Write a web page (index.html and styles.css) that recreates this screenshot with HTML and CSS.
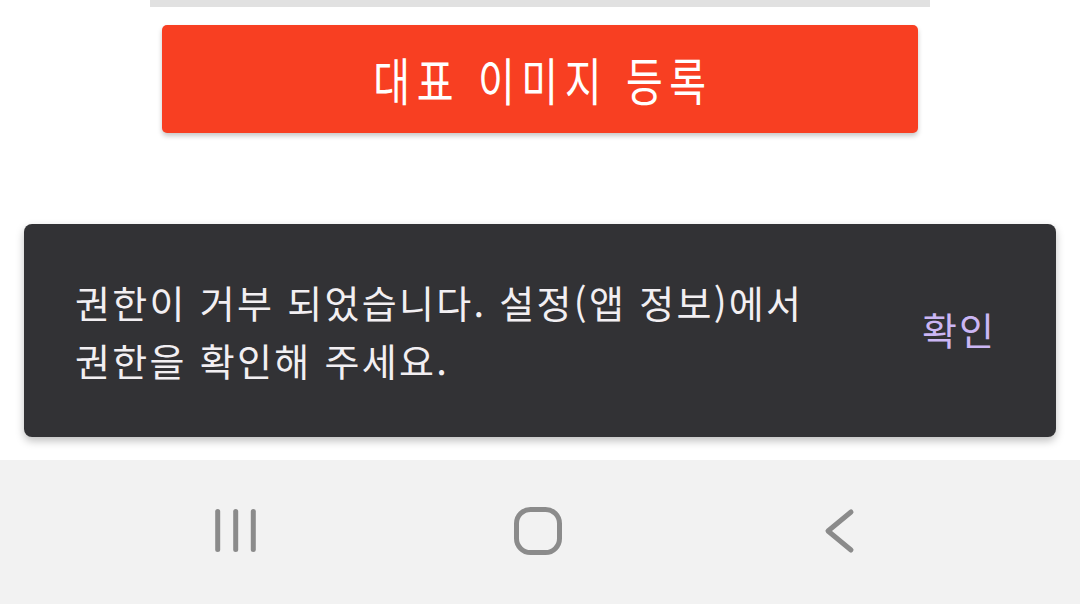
FILE: index.html
```html
<!DOCTYPE html>
<html lang="ko">
<head>
<meta charset="utf-8">
<link rel="stylesheet" href="styles.css">
</head>
<body>
<div class="screen">
  <main class="content">
    <div class="divider"></div>
    <button class="primary-btn"><span class="btn-label">대표 이미지 등록</span></button>
    <div class="snackbar">
      <p class="snack-text">권한이 거부 되었습니다. 설정(앱 정보)에서<br>권한을 확인해 주세요.</p>
      <span class="snack-action">확인</span>
    </div>
  </main>
  <nav class="navbar">
    <svg class="nav-icon" viewBox="0 0 60 60" width="60" height="60">
      <g stroke="#8b8b8b" stroke-width="5" stroke-linecap="round">
        <line x1="11.7" y1="10.5" x2="11.7" y2="48.5"/>
        <line x1="29.7" y1="10.5" x2="29.7" y2="48.5"/>
        <line x1="47.3" y1="10.5" x2="47.3" y2="48.5"/>
      </g>
    </svg>
    <svg class="nav-icon" viewBox="0 0 60 60" width="60" height="60">
      <rect x="8.5" y="8.5" width="43" height="43" rx="14" fill="none" stroke="#8b8b8b" stroke-width="5"/>
    </svg>
    <svg class="nav-icon" viewBox="0 0 60 60" width="60" height="60">
      <polyline points="41,11 18,30 41,49" fill="none" stroke="#8b8b8b" stroke-width="5" stroke-linecap="round" stroke-linejoin="round"/>
    </svg>
  </nav>
</div>
</body>
</html>
```
FILE: styles.css
```css
* { box-sizing: border-box; }
html, body {
  margin: 0;
  padding: 0;
  background: #ffffff;
}
body {
  font-family: "Noto Sans CJK KR", "Noto Sans", sans-serif;
}
.screen {
  width: 1080px;
  height: 604px;
  display: flex;
  flex-direction: column;
  overflow: hidden;
}
.content {
  height: 460px;
  display: flex;
  flex-direction: column;
  align-items: center;
  background: #ffffff;
}
.divider {
  width: 780px;
  height: 7px;
  background: #e1e1e1;
  flex: none;
}
.primary-btn {
  margin-top: 18px;
  width: 756px;
  height: 108px;
  border: none;
  border-radius: 5px;
  background: #f83f22;
  color: #ffffff;
  box-shadow: 0 3px 5px rgba(0,0,0,0.22);
  display: flex;
  align-items: center;
  justify-content: center;
  padding: 0 0 0 6px;
  font-family: "Noto Sans CJK KR", sans-serif;
  flex: none;
}
.btn-label {
  font-size: 40px;
  font-weight: 400;
  letter-spacing: 6.6px;
  display: inline-block;
  transform: scaleY(1.27);
  line-height: 1;
}
.snackbar {
  margin-top: 91px;
  width: 1032px;
  height: 213px;
  border-radius: 8px;
  background: #323235;
  box-shadow: 0 4px 8px rgba(0,0,0,0.25);
  display: flex;
  align-items: center;
  justify-content: space-between;
  padding: 0 60px 0 51px;
  flex: none;
}
.snack-text {
  margin: 0;
  color: #f2eff2;
  font-size: 38px;
  line-height: 58px;
  letter-spacing: 2.3px;
}
.snack-action {
  color: #cbb6f4;
  font-size: 38px;
  line-height: 1;
  letter-spacing: 2px;
  margin-top: -4px;
}
.navbar {
  height: 144px;
  background: #f2f2f2;
  display: flex;
  align-items: center;
  justify-content: center;
  gap: 242px;
  padding: 0 4px 2px 0;
}
.nav-icon {
  display: block;
  flex: none;
}
```
